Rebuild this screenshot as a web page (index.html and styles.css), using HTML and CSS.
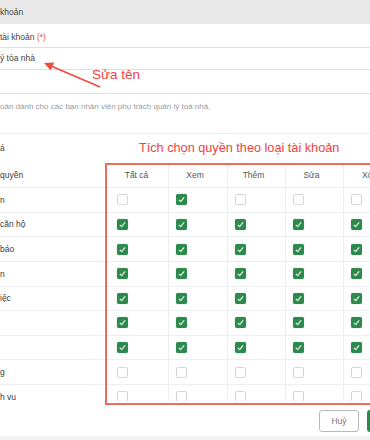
FILE: index.html
```html
<!DOCTYPE html>
<html lang="vi">
<head>
<meta charset="utf-8">
<title>Phân quyền tài khoản</title>
<link rel="stylesheet" href="styles.css">
</head>
<body>
<div class="page">
  <div class="topbar">khoản</div>
  <div class="form">
    <div class="label">tài khoản <span class="req">(*)</span></div>
    <div class="input">ý tòa nhà</div>
    <div class="textarea"></div>
    <div class="help">oản dành cho các bạn nhân viên phụ trách quản lý toà nhà.</div>
  </div>
  <div class="section-title">á</div>
  <div class="table-wrap">
    <div class="row head">
      <div class="name">quyền</div>
      <div class="cell first">Tất cả</div>
      <div class="cell">Xem</div>
      <div class="cell">Thêm</div>
      <div class="cell">Sửa</div>
      <div class="cell">Xóa</div>
    </div>
    <div class="row">
      <div class="name">n</div>
      <div class="cell first"><span class="cb"></span></div>
      <div class="cell"><span class="cb on"></span></div>
      <div class="cell"><span class="cb"></span></div>
      <div class="cell"><span class="cb"></span></div>
      <div class="cell"><span class="cb"></span></div>
    </div>
    <div class="row">
      <div class="name">căn hộ</div>
      <div class="cell first"><span class="cb on"></span></div>
      <div class="cell"><span class="cb on"></span></div>
      <div class="cell"><span class="cb on"></span></div>
      <div class="cell"><span class="cb on"></span></div>
      <div class="cell"><span class="cb on"></span></div>
    </div>
    <div class="row">
      <div class="name">báo</div>
      <div class="cell first"><span class="cb on"></span></div>
      <div class="cell"><span class="cb on"></span></div>
      <div class="cell"><span class="cb on"></span></div>
      <div class="cell"><span class="cb on"></span></div>
      <div class="cell"><span class="cb on"></span></div>
    </div>
    <div class="row">
      <div class="name">n</div>
      <div class="cell first"><span class="cb on"></span></div>
      <div class="cell"><span class="cb on"></span></div>
      <div class="cell"><span class="cb on"></span></div>
      <div class="cell"><span class="cb on"></span></div>
      <div class="cell"><span class="cb on"></span></div>
    </div>
    <div class="row">
      <div class="name">iệc</div>
      <div class="cell first"><span class="cb on"></span></div>
      <div class="cell"><span class="cb on"></span></div>
      <div class="cell"><span class="cb on"></span></div>
      <div class="cell"><span class="cb on"></span></div>
      <div class="cell"><span class="cb on"></span></div>
    </div>
    <div class="row">
      <div class="name"></div>
      <div class="cell first"><span class="cb on"></span></div>
      <div class="cell"><span class="cb on"></span></div>
      <div class="cell"><span class="cb on"></span></div>
      <div class="cell"><span class="cb on"></span></div>
      <div class="cell"><span class="cb on"></span></div>
    </div>
    <div class="row">
      <div class="name"></div>
      <div class="cell first"><span class="cb on"></span></div>
      <div class="cell"><span class="cb on"></span></div>
      <div class="cell"><span class="cb on"></span></div>
      <div class="cell"><span class="cb on"></span></div>
      <div class="cell"><span class="cb on"></span></div>
    </div>
    <div class="row">
      <div class="name">g</div>
      <div class="cell first"><span class="cb"></span></div>
      <div class="cell"><span class="cb"></span></div>
      <div class="cell"><span class="cb"></span></div>
      <div class="cell"><span class="cb"></span></div>
      <div class="cell"><span class="cb"></span></div>
    </div>
    <div class="row">
      <div class="name">h vụ</div>
      <div class="cell first"><span class="cb"></span></div>
      <div class="cell"><span class="cb"></span></div>
      <div class="cell"><span class="cb"></span></div>
      <div class="cell"><span class="cb"></span></div>
      <div class="cell"><span class="cb"></span></div>
    </div>
  </div>
  <div class="footer">
    <div class="btn btn-cancel">Huỷ</div>
    <div class="btn btn-save">Lưu</div>
  </div>
  <div class="bottom-band"></div>

  <div class="note note-name">Sửa tên</div>
  <svg class="arrow" width="120" height="100" viewBox="0 0 120 100">
    <line x1="100" y1="87" x2="51" y2="66" stroke="#ef4a3e" stroke-width="1.6"/>
    <polygon points="44,63 54.2,62.6 50.6,70.2" fill="#ef4a3e"/>
  </svg>
  <div class="note note-perm">Tích chọn quyền theo loại tài khoản</div>
  <div class="highlight"></div>
</div>
</body>
</html>
```

FILE: styles.css
```css
body {
  margin: 0;
  width: 370px;
  height: 440px;
  overflow: hidden;
  background: #fff;
  font-family: "Liberation Sans", Arial, sans-serif;
}

.page {
  position: relative;
  width: 420px;
}

.topbar {
  height: 24px;
  line-height: 24px;
  background: #e9e9e9;
  font-size: 8.5px;
  color: #444;
}

.label {
  margin-top: 4px;
  height: 19px;
  line-height: 19px;
  font-size: 8.5px;
  color: #444;
}

.req {
  color: #e9544a;
}

.input {
  box-sizing: border-box;
  height: 23px;
  line-height: 21px;
  border-top: 1px solid #e0e0e0;
  border-bottom: 1px solid #e0e0e0;
  font-size: 8.5px;
  color: #444;
}

.textarea {
  box-sizing: border-box;
  height: 24px;
  border-bottom: 1px solid #e0e0e0;
}

.help {
  margin-top: 6px;
  line-height: 13px;
  padding-bottom: 20px;
  border-bottom: 1px solid #ececec;
  font-size: 8px;
  color: #9a9a9a;
}

.section-title {
  height: 29px;
  line-height: 29px;
  font-size: 8.5px;
  color: #444;
}

.table-wrap {
  height: 238px;
  overflow: hidden;
}

.row {
  display: grid;
  grid-template-columns: 105px 63px 59px 58px 58px 58px;
  box-sizing: border-box;
  height: 24.625px;
  border-bottom: 1px solid #eceef2;
}

.row.head {
  height: 25px;
}

.name {
  display: flex;
  align-items: center;
  font-size: 8.5px;
  color: #3a3a3a;
}

.cell {
  display: flex;
  align-items: center;
  padding-left: 7px;
  border-left: 1px solid #eceef2;
}

.cell.first {
  padding-left: 12px;
  border-left: none;
}

.head .cell {
  justify-content: center;
  padding-left: 0;
  padding-right: 6px;
  font-size: 8.5px;
  color: #555;
}

.head .cell.first {
  padding-right: 0;
}

.cb {
  position: relative;
  box-sizing: border-box;
  width: 11px;
  height: 11px;
  border: 1px solid #d3d6db;
  border-radius: 2px;
  background: #fff;
}

.cb.on {
  border: none;
  background: #2b8a4c;
  box-shadow: 0 0 1px rgba(0, 60, 20, 0.5);
}

.cb.on::after {
  content: "";
  position: absolute;
  left: 4px;
  top: 2px;
  width: 2px;
  height: 5px;
  border-right: 1.3px solid #fff;
  border-bottom: 1.3px solid #fff;
  transform: rotate(40deg);
}

.footer {
  box-sizing: border-box;
  height: 35px;
  display: flex;
  justify-content: flex-end;
  align-items: flex-start;
  gap: 8px;
  padding-top: 9px;
  padding-right: 8px;
}

.btn {
  box-sizing: border-box;
  height: 22px;
  border-radius: 3px;
  display: flex;
  align-items: center;
  justify-content: center;
  font-size: 8.5px;
}

.btn-cancel {
  width: 40px;
  border: 1px solid #b8b8b8;
  color: #777;
  background: #fff;
}

.btn-save {
  width: 45px;
  background: #2b8a4c;
  color: #fff;
}

.bottom-band {
  height: 10px;
  background: #f2f2f2;
}

.note {
  position: absolute;
  color: #f2433b;
  white-space: nowrap;
}

.note-name {
  left: 92px;
  top: 66px;
  font-size: 13.5px;
  line-height: 18px;
}

.note-perm {
  left: 139px;
  top: 139px;
  font-size: 12.7px;
  line-height: 18px;
}

.arrow {
  position: absolute;
  left: 0;
  top: 0;
}

.highlight {
  position: absolute;
  left: 105px;
  top: 163px;
  width: 285px;
  height: 242px;
  box-sizing: border-box;
  border: 2px solid #ef6b5b;
  pointer-events: none;
}
```
